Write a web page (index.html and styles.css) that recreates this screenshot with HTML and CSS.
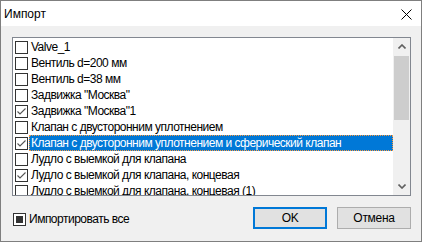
FILE: index.html
```html
<!DOCTYPE html>
<html>
<head>
<meta charset="utf-8">
<link rel="stylesheet" href="styles.css">
</head>
<body>
<div class="window">
  <div class="titlebar">
    <span class="title">Импорт</span>
    <svg class="close" width="11" height="11" viewBox="0 0 11 11"><path d="M0.5 0.5 L10.5 10.5 M10.5 0.5 L0.5 10.5" stroke="#000" stroke-width="1" fill="none"/></svg>
  </div>
  <div class="content">
    <div class="listbox">
      <div class="items">
        <div class="row"><span class="cb"></span><span class="label">Valve_1</span></div>
        <div class="row"><span class="cb"></span><span class="label">Вентиль d=200 мм</span></div>
        <div class="row"><span class="cb"></span><span class="label">Вентиль d=38 мм</span></div>
        <div class="row"><span class="cb"></span><span class="label">Задвижка "Москва"</span></div>
        <div class="row"><span class="cb checked"><svg width="11" height="11" viewBox="0 0 11 11"><polyline points="1.5,5.5 4,8 9.5,2.5" fill="none" stroke="#555" stroke-width="1.1"/></svg></span><span class="label">Задвижка "Москва"1</span></div>
        <div class="row"><span class="cb"></span><span class="label">Клапан с двусторонним уплотнением</span></div>
        <div class="row"><span class="cb checked"><svg width="11" height="11" viewBox="0 0 11 11"><polyline points="1.5,5.5 4,8 9.5,2.5" fill="none" stroke="#555" stroke-width="1.1"/></svg></span><span class="label selected">Клапан с двусторонним уплотнением и сферический клапан</span></div>
        <div class="row"><span class="cb"></span><span class="label">Лудло с выемкой для клапана</span></div>
        <div class="row"><span class="cb checked"><svg width="11" height="11" viewBox="0 0 11 11"><polyline points="1.5,5.5 4,8 9.5,2.5" fill="none" stroke="#555" stroke-width="1.1"/></svg></span><span class="label">Лудло с выемкой для клапана, концевая</span></div>
        <div class="row"><span class="cb"></span><span class="label">Лудло с выемкой для клапана, концевая (1)</span></div>
      </div>
      <div class="scrollbar">
        <div class="sbtn"><svg width="8" height="5" viewBox="0 0 8 5"><polyline points="0.5,4.5 4,1 7.5,4.5" fill="none" stroke="#606060" stroke-width="1.6"/></svg></div>
        <div class="thumb"></div>
        <div class="track"></div>
        <div class="sbtn"><svg width="8" height="5" viewBox="0 0 8 5"><polyline points="0.5,0.5 4,4 7.5,0.5" fill="none" stroke="#606060" stroke-width="1.6"/></svg></div>
      </div>
    </div>
    <div class="footer">
      <label class="all"><span class="cb mixed"><span class="fill"></span></span><span class="alltext">Импортировать все</span></label>
      <div class="buttons">
        <button class="btn default">OK</button>
        <button class="btn">Отмена</button>
      </div>
    </div>
  </div>
</div>
</body>
</html>
```
FILE: styles.css
```css
html, body {
  margin: 0;
  padding: 0;
}
body {
  font-family: "Liberation Sans", Arial, sans-serif;
  font-size: 12px;
  letter-spacing: -0.5px;
  color: #000;
}
.window {
  width: 422px;
  height: 242px;
  box-sizing: border-box;
  border: 1px solid #7f7f7f;
  background: #f0f0f0;
  display: flex;
  flex-direction: column;
  overflow: hidden;
}
.titlebar {
  height: 25px;
  flex: none;
  background: #fff;
  display: flex;
  align-items: center;
  justify-content: space-between;
  padding: 0 9px 0 3px;
}
.title {
  font-size: 12px;
  letter-spacing: 0;
  margin-top: 1px;
}
.close {
  display: block;
  margin-top: 2px;
}
.content {
  padding: 11px 10px 0 11px;
  display: flex;
  flex-direction: column;
}
.listbox {
  height: 159px;
  box-sizing: border-box;
  border: 1px solid #828790;
  background: #fff;
  display: flex;
  overflow: hidden;
}
.items {
  flex: 1;
  padding-top: 1px;
  overflow: hidden;
}
.row {
  height: 16px;
  display: flex;
  align-items: center;
  padding-left: 2px;
  white-space: nowrap;
}
.cb {
  width: 13px;
  height: 13px;
  box-sizing: border-box;
  border: 1px solid #333;
  background: #fff;
  flex: none;
  display: flex;
  align-items: center;
  justify-content: center;
}
.cb svg {
  display: block;
}
.label {
  margin-left: 1px;
  padding: 0 1px;
  line-height: 14px;
  height: 16px;
  box-sizing: border-box;
  display: flex;
  align-items: center;
  border: 1px solid transparent;
}
.label.selected {
  flex: 1;
  background: #0078d7;
  color: #fff;
  border: 1px dotted #ff9a3c;
}
.scrollbar {
  width: 17px;
  flex: none;
  background: #f0f0f0;
  display: flex;
  flex-direction: column;
}
.sbtn {
  height: 17px;
  flex: none;
  display: flex;
  align-items: center;
  justify-content: center;
}
.sbtn svg {
  display: block;
}
.thumb {
  height: 64px;
  margin: 1px 1px 0 1px;
  background: #cdcdcd;
  flex: none;
}
.track {
  flex: 1;
}
.footer {
  margin-top: 11px;
  display: flex;
  align-items: center;
  justify-content: space-between;
  height: 22px;
}
.all {
  display: flex;
  align-items: center;
  padding-left: 1px;
  margin-top: 2px;
}
.cb.mixed .fill {
  width: 7px;
  height: 7px;
  background: #333;
}
.alltext {
  margin-left: 3px;
}
.buttons {
  display: flex;
  gap: 10px;
}
.btn {
  width: 74px;
  height: 22px;
  box-sizing: border-box;
  border: 1px solid #adadad;
  background: #e1e1e1;
  font-family: "Liberation Sans", Arial, sans-serif;
  font-size: 12px;
  letter-spacing: -0.3px;
  color: #000;
  padding: 0;
  margin: 0;
}
.btn.default {
  border: 2px solid #0078d7;
}
```
